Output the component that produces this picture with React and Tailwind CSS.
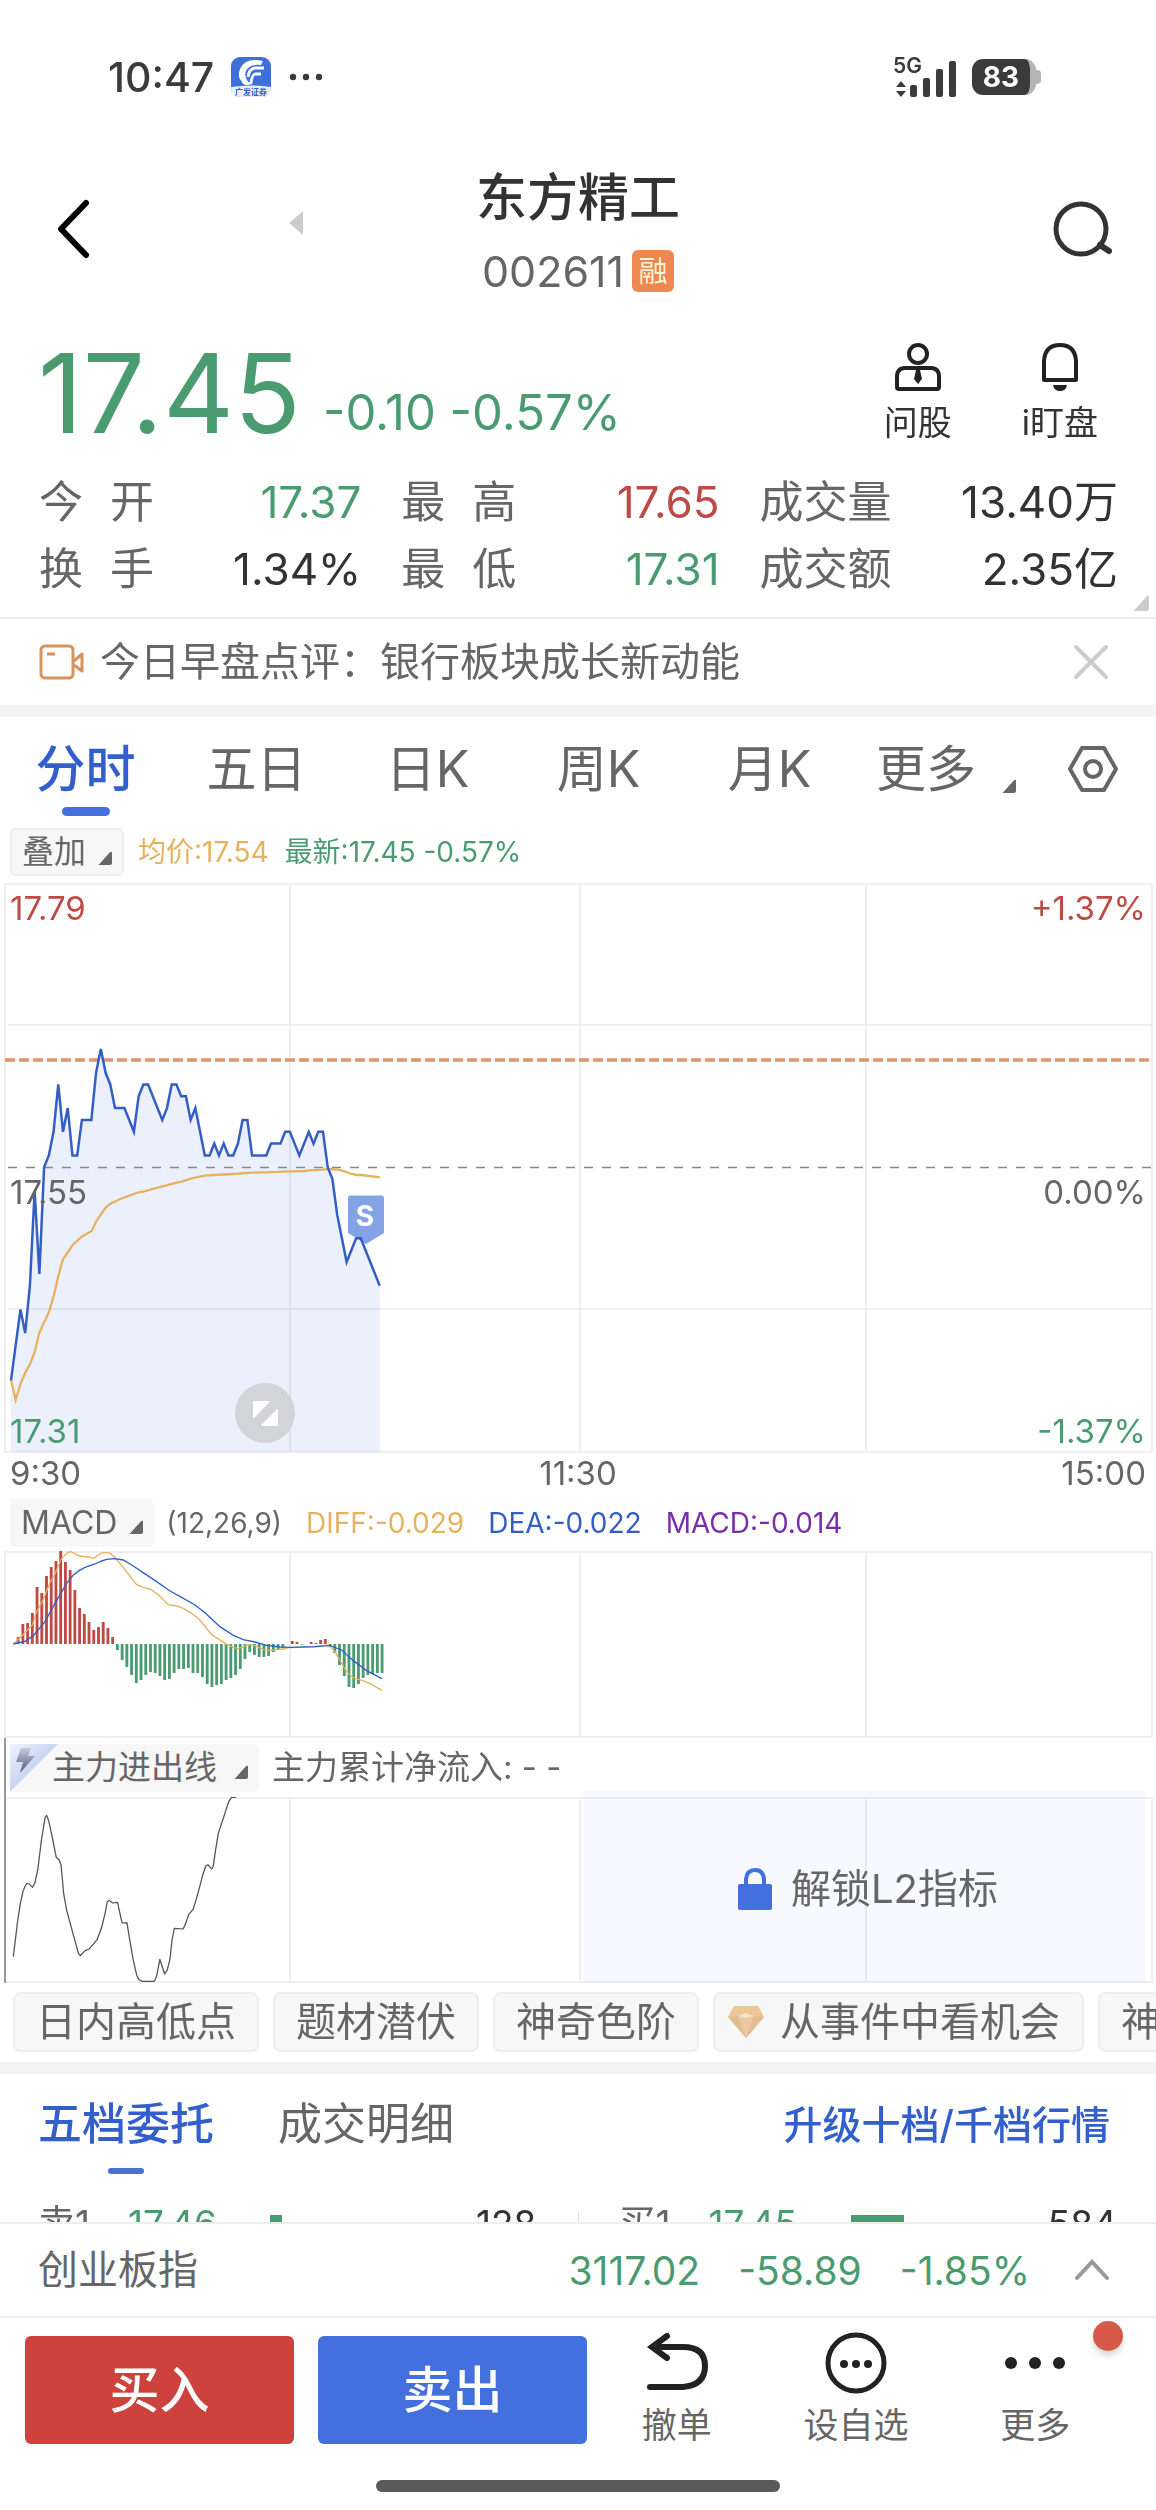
import { useState } from 'react'

// minute prices, in cents around the previous close 17.55
const PRICES = [
  -18, -15, -12, -14, -10, -2, -9, 0, 1, 3, 7, 3, 5, 1, 1, 4, 4, 4, 8, 10,
  8, 7, 5, 5, 5, 4, 3, 6, 7, 7, 6, 5, 4, 5, 7, 7, 6, 6, 4, 5,
  3, 1, 1, 2, 1, 2, 1, 1, 2, 4, 4, 1, 1, 1, 1, 2, 2, 2, 3, 3,
  2, 1, 2, 3, 2, 3, 3, 0, -1, -4, -6, -8, -7, -6, -6, -7, -8, -9, -10,
]

const AVERAGE =
  '33,1080 47,1140 62,1090 76,1058 90,1032 104,997 118,938 133,906 147,876 161,828 175,768 189,718 204,696 218,675 245,650 275,633 289,603 317,563 331,551 345,545 360,537 415,517 430,515 487,499 500,496 530,488 545,485 575,475 614,467 640,465 700,462 756,458 800,457 870,454 913,453 930,451 970,449 985,447 1012,449 1027,452 1055,462 1070,465 1085,465 1140,472'

const MACD_BARS = [
  0, 21, 60, 63, 93, 171, 153, 204, 231, 249, 279, 246, 222, 162, 108, 90, 66, 42, 51, 66,
  48, 21, -18, -48, -69, -93, -117, -108, -93, -84, -87, -96, -108, -105, -87, -75, -75, -72, -87, -87,
  -99, -120, -129, -123, -120, -108, -102, -93, -75, -45, -24, -33, -39, -39, -36, -24, -18, -12, 0, 9,
  6, -2, 0, 6, 3, 12, 15, -6, -27, -63, -96, -129, -132, -120, -102, -93, -90, -87, -87,
]

const DIFF =
  '40,432 62,412 97,375 110,335 128,302 150,248 165,222 183,178 195,165 205,157 213,155 225,161 237,168 265,171 282,175 297,163 310,157 325,158 335,164 347,175 375,209 410,254 430,262 450,267 475,284 505,314 530,318 550,325 575,340 600,360 635,404 680,433 700,442 715,446 730,440 745,434 765,437 790,448 810,451 850,447 865,443 940,441 985,435 1005,455 1040,515 1060,533 1090,543 1110,550 1146,571'

const DEA =
  '40,432 75,424 100,407 135,365 165,310 200,250 220,225 237,212 255,202 285,192 305,183 320,178 345,176 370,180 400,198 425,215 470,245 510,273 545,292 585,315 615,338 660,380 700,406 730,419 765,426 800,436 840,441 870,442 940,440 990,437 1025,450 1060,482 1100,512 1146,536'

const FUND =
  '36,710 48,600 55,550 62,515 68,498 73,490 80,493 88,502 94,490 102,450 112,360 122,292 126,286 131,300 140,345 152,412 160,420 165,435 172,520 180,570 197,640 212,700 217,707 230,692 240,688 262,660 274,625 284,580 290,545 294,541 305,549 318,547 322,570 330,609 343,608 350,655 360,720 370,768 376,779 384,784 416,784 420,778 424,765 432,718 437,735 445,762 452,750 459,720 465,660 471,625 495,627 502,610 510,583 522,568 535,520 548,465 556,438 562,434 572,447 576,440 582,395 590,340 605,290 618,245 626,232 638,232'

const STATS = [
  { label: '今开', value: '17.37', color: 'text-[#4b9b71]' },
  { label: '最高', value: '17.65', color: 'text-[#bd4a45]' },
  { label: '成交量', value: '13.40万', color: 'text-[#333333]' },
  { label: '换手', value: '1.34%', color: 'text-[#333333]' },
  { label: '最低', value: '17.31', color: 'text-[#4b9b71]' },
  { label: '成交额', value: '2.35亿', color: 'text-[#333333]' },
]

const PERIODS = ['分时', '五日', '日K', '周K', '月K']

const ORDERS = [
  { side: '卖1', price: '17.46', volume: '128', bar: 'w-[12px]' },
  { side: '买1', price: '17.45', volume: '584', bar: 'w-[53px]' },
]

const priceX = (i) => 11 + i * 4.727
const priceY = (p) => 284.3 - p * 11.84
const PRICE_LINE = PRICES.map((p, i) => `${priceX(i)},${priceY(p)}`).join(' ')

function Corner({ className = 'size-[14px] text-[#666666]' }) {
  return (
    <svg viewBox="0 0 14 14" className={className} aria-hidden="true">
      <path d="M1 13.5 12 1.2Q14 0 14 2V12Q14 14 12 14H1.4Q0 14.200 1 13.500Z" fill="currentColor" />
    </svg>
  )
}

function Grid({ height }) {
  return (
    <g stroke="#efefef" strokeWidth="2" fill="none">
      <path d={`M5 1H1152V${height - 1}H5Z`} />
      <path d={`M290 1V${height - 1}M580 1V${height - 1}M866 1V${height - 1}`} />
    </g>
  )
}

function StatusBar() {
  return (
    <div className="flex h-[154px] items-center justify-between pr-[115px] pl-[108px] text-[#3b3b3b]">
      <div className="flex items-center">
        <span className="text-[41px] leading-none font-medium">10:47</span>
        <svg viewBox="0 0 40 40" className="ml-[17px] size-[40px]" aria-hidden="true">
          <rect width="40" height="40" rx="9" fill="#3f6fdc" />
          <path d="M0 30Q20 27 40 30V31Q40 40 31 40H9Q0 40 0 31Z" fill="#e8eefb" />
          <path d="M32 4Q14 0 9 12Q5 23 15 27L18 26Q11 17 17 11Q21 7 30 8Z" fill="#fff" />
          <path d="M33 11H24Q18 12 17 20M30 17H24Q21 18 20 26Q14 28 12 24" fill="none" stroke="#fff" strokeWidth="2.800" />
          <text x="20" y="38" fontSize="8" fontWeight="700" textAnchor="middle" fill="#3460c8">广发证券</text>
        </svg>
        <svg viewBox="0 0 34 8" className="ml-[18px] h-[8px] w-[34px]" fill="currentColor" aria-hidden="true">
          <circle cx="4" cy="4" r="3.200" />
          <circle cx="17" cy="4" r="3.200" />
          <circle cx="30" cy="4" r="3.200" />
        </svg>
      </div>
      <div className="flex items-center gap-[15px]">
        <svg viewBox="0 0 64 42" className="h-[42px] w-[64px] overflow-visible" fill="currentColor" aria-hidden="true">
          <text x="0" y="17" fontSize="21" fontWeight="600">5G</text>
          <path d="M3 31 8 25 13 31ZM3 35H13L8 41Z" />
          <rect x="17" y="29" width="7" height="12" rx="2" />
          <rect x="30" y="22" width="7" height="19" rx="2" />
          <rect x="43" y="13" width="7" height="28" rx="2" />
          <rect x="56" y="5" width="7" height="36" rx="2" />
        </svg>
        <div className="flex items-center">
          <div className="flex h-[36px] w-[64px] items-center justify-center rounded-[11px] border-r-[6px] border-[#b5b5b5] bg-[#3b3b3b] text-[28px] leading-none font-bold text-white">
            83
          </div>
          <div className="h-[14px] w-[5px] rounded-r bg-[#b5b5b5]" />
        </div>
      </div>
    </div>
  )
}

function Header() {
  return (
    <header className="grid h-[150px] grid-cols-[1fr_auto_1fr] items-center px-[42px]">
      <div className="flex items-center pl-[14px]">
        <button type="button" aria-label="返回">
          <svg viewBox="0 0 34 60" className="h-[60px] w-[34px]" fill="none" stroke="#000" strokeWidth="6" strokeLinecap="round" strokeLinejoin="round">
            <path d="M30 4 5 30 30 56" />
          </svg>
        </button>
        <button type="button" aria-label="上一只" className="mb-[12px] ml-[198px]">
          <svg viewBox="0 0 16 26" className="h-[26px] w-[16px]" fill="#cccccc">
            <path d="M15 1V25L1 13Z" />
          </svg>
        </button>
      </div>
      <div className="flex flex-col items-center">
        <h1 className="text-[51px] leading-[64px] font-medium text-[#333333]">东方精工</h1>
        <div className="mt-5 flex h-[42px] items-center gap-2 text-[43px] leading-none text-[#666666]">
          002611
          <span className="flex size-[42px] items-center justify-center rounded-[6px] bg-[#ec8850] text-[29px] text-[#fff3d8]">
            融
          </span>
        </div>
      </div>
      <button type="button" aria-label="搜索" className="justify-self-end">
        <svg viewBox="0 0 62 58" className="h-[58px] w-[62px]" fill="none" stroke="#333333" strokeWidth="5" strokeLinecap="round">
          <circle cx="29" cy="29" r="25" />
          <path d="M48 45 57 51" strokeWidth="6" />
        </svg>
      </button>
    </header>
  )
}

function Quote() {
  return (
    <section className="border-b-2 border-[#eeeeee] pt-[29px] pb-[14px]">
      <div className="flex items-center justify-between pr-[58px] pl-[38px]">
        <div className="flex items-end text-[#4b9b71]">
          <span className="text-[110px] leading-[120px]">17.45</span>
          <span className="ml-[22px] text-[49px] leading-[80px]">-0.10 -0.57%</span>
        </div>
        <div className="flex gap-[70px] text-[34px] leading-[40px] text-[#333333]">
          <button type="button" className="flex flex-col items-center gap-3">
            <svg viewBox="0 0 48 48" className="size-[48px]" fill="none" stroke="#222222" strokeWidth="4">
              <circle cx="24" cy="11" r="9" />
              <path d="M10 25H38Q45 26 45 33V44Q45 46 43 46H5Q3 46 3 44V33Q3 26 10 25Z" />
              <path d="M22 27H26L28 36 24 41 20 36Z" fill="#222222" stroke="none" />
            </svg>
            问股
          </button>
          <button type="button" className="flex flex-col items-center gap-3">
            <svg viewBox="0 0 48 48" className="size-[48px]" fill="none" stroke="#222222" strokeWidth="4">
              <path d="M8 37V18Q9 2 24 2Q39 2 40 18V37Z" strokeLinejoin="round" />
              <path d="M17 42H31Q30 48 24 48Q18 48 17 42Z" fill="#222222" stroke="none" />
            </svg>
            i盯盘
          </button>
        </div>
      </div>
      <div className="relative">
        <dl className="mt-[16px] grid grid-cols-[321fr_317fr_357fr] gap-x-[40px] pr-[38px] pl-[39px] text-[44px] leading-[67px]">
          {STATS.map((s) => (
            <div key={s.label} className="flex justify-between">
              <dt className="flex text-[#666666]">
                {s.label.length === 2 ? (
                  <>
                    <span className="mr-[27px]">{s.label[0]}</span>
                    <span>{s.label[1]}</span>
                  </>
                ) : (
                  s.label
                )}
              </dt>
              <dd className={s.color}>{s.value}</dd>
            </div>
          ))}
        </dl>
        <Corner className="absolute right-[7px] -bottom-2 size-[16px] text-[#cccccc]" />
      </div>
    </section>
  )
}

function NewsBar() {
  return (
    <section className="flex h-[86px] items-center pr-[47px] pl-[39px]">
      <svg viewBox="0 0 46 36" className="h-[36px] w-[46px]" fill="none" stroke="#d8935c" strokeWidth="3" aria-hidden="true">
        <rect x="2" y="2" width="32" height="32" rx="4" />
        <path d="M8 10H16" />
        <path d="M35 17 43 10V27L35 21" strokeLinejoin="round" />
      </svg>
      <a href="#news" className="ml-[15px] grow text-[40px] leading-none text-[#666666]">
        今日早盘点评：银行板块成长新动能
      </a>
      <button type="button" aria-label="关闭">
        <svg viewBox="0 0 36 36" className="size-[36px]" stroke="#cccccc" strokeWidth="4" strokeLinecap="round">
          <path d="M3 3 33 33M33 3 3 33" />
        </svg>
      </button>
    </section>
  )
}

function PeriodTabs() {
  const [active, setActive] = useState('分时')
  return (
    <nav className="grid h-[104px] grid-cols-[171fr_171fr_171fr_171fr_171fr_182fr_111fr] pr-2 text-[50px] leading-none text-[#666666]">
      {PERIODS.map((p) => (
        <button
          key={p}
          type="button"
          onClick={() => setActive(p)}
          className={p === active ? 'relative font-medium text-[#335fcc]' : 'relative'}
        >
          {p}
          {p === active && (
            <span className="absolute bottom-[5px] left-1/2 h-[9px] w-[48px] -translate-x-1/2 rounded-full bg-[#4470df]" />
          )}
        </button>
      ))}
      <button type="button" className="flex items-center justify-center gap-[26px]">
        更多
        <Corner className="mt-[34px] size-[14px] text-[#666666]" />
      </button>
      <button type="button" aria-label="设置" className="flex items-center justify-center">
        <svg viewBox="0 0 50 48" className="h-[48px] w-[50px]" fill="none" stroke="#666666" strokeWidth="4" strokeLinejoin="round">
          <path d="M14 3H36L48 24 36 45H14L2 24Z" />
          <circle cx="25" cy="24" r="8" />
        </svg>
      </button>
    </nav>
  )
}

function PriceChart() {
  return (
    <section>
      <div className="flex h-[62px] items-center pl-[10px] text-[28px] leading-none">
        <button type="button" className="flex h-[48px] items-center gap-[12px] rounded-[6px] border-2 border-[#eeeeee] bg-[#f7f7f7] px-[10px] text-[32px] text-[#666666]">
          叠加
          <Corner className="mt-[12px] size-[14px] text-[#666666]" />
        </button>
        <span className="ml-[14px] text-[#e5b25f]">均价:17.54</span>
        <span className="ml-[16px] text-[#4b9b71]">最新:17.45 -0.57%</span>
      </div>
      <div className="relative text-[33px] leading-[40px]">
        <svg viewBox="0 0 1156 570" preserveAspectRatio="none" className="h-[570px] w-full" aria-hidden="true">
          <polygon points={`11,569 ${PRICE_LINE} 379.700,569`} fill="#ecf0fd" />
          <g className="mix-blend-multiply">
            <Grid height={570} />
            <path d="M8 142H1151M8 426H1151" stroke="#ebebeb" strokeWidth="1.500" />
          </g>
          <path d="M8 284.500H1151" stroke="#888888" strokeWidth="1.500" strokeDasharray="9 9" />
          <path d="M5 177H1151" stroke="#dc956c" strokeWidth="3.500" strokeDasharray="10 4" />
          <g transform="translate(0 137) scale(0.3333)">
            <polyline points={AVERAGE} fill="none" stroke="#e5b25f" strokeWidth="7" />
          </g>
          <path d="M350 312.500H382Q384 312.500 384 315V350L366 361 348 350V315Q348 312.500 350 312.500Z" fill="#84a3e6" />
          <text x="365" y="343" fontSize="28" fontWeight="700" textAnchor="middle" fill="#fff">S</text>
          <polyline points={PRICE_LINE} fill="none" stroke="#335fc4" strokeWidth="2.500" />
        </svg>
        <span className="absolute top-[5px] left-[10px] text-[#bd4a45]">17.79</span>
        <span className="absolute top-[5px] right-[10px] text-[#bd4a45]">+1.37%</span>
        <span className="absolute top-[289px] left-[10px] text-[#666666]">17.55</span>
        <span className="absolute top-[289px] right-[10px] text-[#666666]">0.00%</span>
        <span className="absolute bottom-[2px] left-[10px] text-[#4b9b71]">17.31</span>
        <span className="absolute right-[10px] bottom-[2px] text-[#4b9b71]">-1.37%</span>
        <button
          type="button"
          aria-label="全屏"
          className="absolute bottom-[10px] left-[235px] flex size-[60px] items-center justify-center rounded-full bg-[#d3d4d8]"
        >
          <svg viewBox="0 0 24 24" className="size-[25px]" fill="#fff">
            <path d="M1 0H15Q17 0 15.500 1.500L1.500 15.500Q0 17 0 15V1Q0 0 1 0Z" />
            <path d="M23 24H9Q7 24 8.500 22.500L22.500 8.500Q24 7 24 9V23Q24 24 23 24Z" />
          </svg>
        </button>
      </div>
      <div className="grid h-[41px] grid-cols-3 items-center px-[10px] text-[33px] leading-none text-[#666666]">
        <span>9:30</span>
        <span className="text-center">11:30</span>
        <span className="text-right">15:00</span>
      </div>
    </section>
  )
}

function MacdChart() {
  return (
    <section>
      <div className="flex h-[57px] items-center pl-[10px] text-[28px] leading-none">
        <button type="button" className="flex h-[48px] items-center gap-[12px] rounded-r-[6px] bg-[#f7f7f7] px-[11px] text-[32px] text-[#666666]">
          MACD
          <Corner className="mt-[8px] size-[14px] text-[#666666]" />
        </button>
        <span className="ml-[12px] text-[#666666]">(12,26,9)</span>
        <span className="ml-[24px] text-[#e5b25f]">DIFF:-0.029</span>
        <span className="ml-[24px] text-[#335fc4]">DEA:-0.022</span>
        <span className="ml-[24px] text-[#7b2da8]">MACD:-0.014</span>
      </div>
      <svg viewBox="0 0 1156 187" preserveAspectRatio="none" className="h-[187px] w-full" aria-hidden="true">
        <Grid height={187} />
        <g transform="translate(0 -51) scale(0.3333)">
          {MACD_BARS.map((v, i) => (
            <rect
              key={i}
              x={36 + i * 14.18}
              y={v > 0 ? 432 - v : 432}
              width="8.500"
              height={Math.abs(v)}
              fill={v > 0 ? '#bd4a45' : '#4b9b71'}
            />
          ))}
          <polyline points={DIFF} fill="none" stroke="#e5b25f" strokeWidth="4" />
          <polyline points={DEA} fill="none" stroke="#335fc4" strokeWidth="4" />
        </g>
      </svg>
    </section>
  )
}

function FundChart() {
  return (
    <section className="relative">
      <div className="flex h-[59px] items-center pl-[10px] text-[33px] leading-none text-[#666666]">
        <button type="button" className="relative flex h-[48px] items-center gap-[17px] rounded-[6px] bg-[#f7f7f7] pr-[11px] pl-[42px]">
          <svg viewBox="0 0 48 48" className="absolute top-0 left-0 size-[48px]" aria-hidden="true">
            <defs>
              <linearGradient id="tag" x1="0" y1="0" x2="1" y2="1">
                <stop offset="0" stopColor="#eef2fc" />
                <stop offset="0.500" stopColor="#c9d5f2" />
              </linearGradient>
              <linearGradient id="bolt" x1="0" y1="0" x2="0" y2="1">
                <stop offset="0" stopColor="#c3cbe0" />
                <stop offset="1" stopColor="#525b75" />
              </linearGradient>
            </defs>
            <path d="M0 0H48L0 48Z" fill="url(#tag)" />
            <path d="M11 4H21L18 12H25L10 29L13 18H6Z" fill="url(#bolt)" />
          </svg>
          主力进出线
          <Corner className="mt-[8px] size-[14px] text-[#666666]" />
        </button>
        <span className="ml-[13px]">主力累计净流入: - -</span>
      </div>
      <div className="relative">
        <svg viewBox="0 0 1156 186" preserveAspectRatio="none" className="h-[186px] w-full" aria-hidden="true">
          <Grid height={186} />
          <path d="M5 0V186" stroke="#999999" strokeWidth="2" />
          <g transform="translate(0 -77) scale(0.37 0.3333)">
            <polyline points={FUND} fill="none" stroke="#555555" strokeWidth="3.500" strokeLinejoin="round" />
          </g>
        </svg>
        <button
          type="button"
          className="absolute -top-[6px] right-[10px] bottom-[1px] left-[583px] flex items-center justify-center gap-[18px] bg-[#4470df]/4 pt-[4px] pl-[6px] text-[40px] leading-none text-[#666666]"
        >
          <svg viewBox="0 0 36 44" className="h-[44px] w-[36px]" aria-hidden="true">
            <rect x="1" y="17" width="34" height="26" rx="2" fill="#4470df" />
            <path d="M9 18V12Q10 3 18 3Q26 3 27 12V18" fill="none" stroke="#4470df" strokeWidth="4" />
          </svg>
          解锁L2指标
        </button>
      </div>
      <span className="absolute top-0 left-1 h-[59px] w-[2px] bg-[#999999]" />
    </section>
  )
}

function Chip({ children }) {
  return (
    <button type="button" className="shrink-0 rounded-[8px] border-2 border-[#eeeeee] bg-[#f7f7f7] px-[21px]">
      {children}
    </button>
  )
}

function ToolChips() {
  return (
    <div className="flex h-[79px] gap-[14px] overflow-hidden pt-[9px] pb-[10px] pl-[13px] text-[40px] leading-none whitespace-nowrap text-[#666666]">
      <Chip>日内高低点</Chip>
      <Chip>题材潜伏</Chip>
      <Chip>神奇色阶</Chip>
      <button type="button" className="flex shrink-0 items-center gap-[15px] rounded-[8px] border-2 border-[#eeeeee] bg-[#f7f7f7] pr-[22px] pl-[12px]">
        <svg viewBox="0 0 38 34" className="h-[34px] w-[38px]" aria-hidden="true">
          <path d="M7 1H31L37 12 19 33 1 12Z" fill="#ecc9a0" />
          <path d="M7 1H31L37 12H1Z" fill="#eec796" />
          <path d="M1 12 11 11 19 33ZM37 12 27 11 19 33Z" fill="#e0bd92" />
          <path d="M11 11 19 8 27 11 19 13Z" fill="#f8e3c6" />
        </svg>
        从事件中看机会
      </button>
      <Chip>神奇九转</Chip>
    </div>
  )
}

function OrderBook() {
  return (
    <section>
      <div className="flex h-[100px] items-stretch pr-[46px] pl-[38px] text-[44px] leading-none">
        <button type="button" className="relative font-medium text-[#335fcc]">
          五档委托
          <span className="absolute bottom-0 left-1/2 h-[6px] w-[36px] -translate-x-1/2 rounded-full bg-[#4a70d0]" />
        </button>
        <button type="button" className="ml-[64px] text-[#666666]">成交明细</button>
        <a href="#upgrade" className="ml-auto self-center text-[39px] font-medium text-[#335fcc]">
          升级十档/千档行情
        </a>
      </div>
      <div className="relative grid grid-cols-2 gap-x-[82px] pt-[28px] pr-[39px] pl-[38px] text-[37px] leading-[44px]">
        {ORDERS.map((o) => (
          <table key={o.side} className="w-full table-fixed">
            <tbody>
              <tr>
                <th scope="row" className="w-[90px] text-left font-normal text-[#666666]">{o.side}</th>
                <td className="w-[142px] text-[#4b9b71]">{o.price}</td>
                <td>
                  <div className={`h-[18px] bg-[#4b9b71] ${o.bar}`} />
                </td>
                <td className="text-right text-[#333333]">{o.volume}</td>
              </tr>
            </tbody>
          </table>
        ))}
        <span className="absolute top-[38px] left-1/2 h-[24px] w-px bg-[#dddddd]" />
      </div>
    </section>
  )
}

function ActionItem({ label, children }) {
  return (
    <button type="button" className="flex flex-col items-center">
      <svg viewBox="0 0 64 64" className="size-[64px]" fill="none" stroke="#222222" strokeWidth="6" aria-hidden="true">
        {children}
      </svg>
      <span className="mt-[8px] leading-[44px]">{label}</span>
    </button>
  )
}

function Footer() {
  return (
    <footer className="relative shrink-0 bg-white">
      <div className="flex h-[96px] items-center border-y-2 border-[#eeeeee] pr-[46px] pl-[38px] text-[39px] leading-none text-[#4b9b71]">
        <span className="grow text-[40px] text-[#666666]">创业板指</span>
        <span>3117.02</span>
        <span className="ml-[38px]">-58.89</span>
        <span className="ml-[38px]">-1.85%</span>
        <button type="button" aria-label="展开" className="ml-[44px]">
          <svg viewBox="0 0 36 22" className="h-[22px] w-[36px]" fill="none" stroke="#999999" strokeWidth="4" strokeLinecap="round">
            <path d="M3 19 18 3 33 19" />
          </svg>
        </button>
      </div>
      <div className="grid grid-cols-[269fr_269fr_514fr] gap-x-6 pt-[13px] pr-[31px] pl-[25px]">
        <button type="button" className="mt-[5px] h-[108px] rounded-[6px] bg-[#cd423d] text-[50px] font-medium text-white">
          买入
        </button>
        <button type="button" className="mt-[5px] h-[108px] rounded-[6px] bg-[#4470df] text-[50px] font-medium text-white">
          卖出
        </button>
        <div className="-ml-6 grid grid-cols-3 text-[35px] text-[#666666]">
          <ActionItem label="撤单">
            <path d="M5 56H38Q60 54 60 35Q60 16 38 16H8" strokeLinecap="round" />
            <path d="M22 5 7 16 22 27" strokeLinecap="round" />
          </ActionItem>
          <ActionItem label="设自选">
            <circle cx="32" cy="32" r="28" strokeWidth="5" />
            <g fill="#222222" stroke="none">
              <circle cx="20" cy="33" r="4" />
              <circle cx="32" cy="33" r="4" />
              <circle cx="44" cy="33" r="4" />
            </g>
          </ActionItem>
          <ActionItem label="更多">
            <g fill="#222222" stroke="none">
              <circle cx="8" cy="32" r="6" />
              <circle cx="32" cy="32" r="6" />
              <circle cx="56" cy="32" r="6" />
            </g>
          </ActionItem>
        </div>
      </div>
      <span className="absolute top-[99px] right-[33px] size-[30px] rounded-full bg-[#d8594a] shadow-[0_5px_6px_rgba(0,0,0,0.15)]" />
      <div className="mx-auto mt-[33px] mb-[18px] h-[12px] w-[404px] rounded-full bg-[#5a5a5a]" />
    </footer>
  )
}

export default function App() {
  return (
    <div className="flex h-screen flex-col bg-white font-['Inter','Noto_Sans_CJK_SC',sans-serif]">
      <main className="min-h-0 flex-1 overflow-hidden">
        <StatusBar />
        <Header />
        <Quote />
        <NewsBar />
        <div className="h-[12px] bg-[#f4f4f4]" />
        <PeriodTabs />
        <PriceChart />
        <MacdChart />
        <FundChart />
        <ToolChips />
        <div className="h-[12px] bg-[#f4f4f4]" />
        <OrderBook />
      </main>
      <Footer />
    </div>
  )
}
